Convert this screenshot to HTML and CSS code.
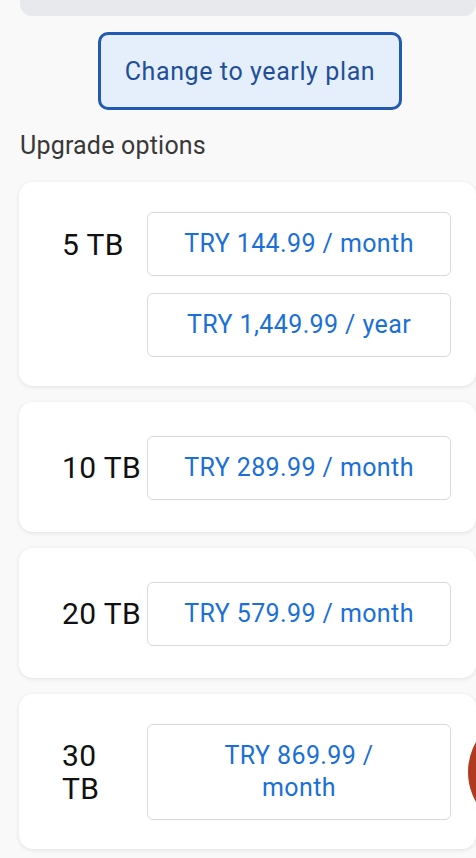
FILE: index.html
```html
<!DOCTYPE html>
<html lang="en">

<head>
    <meta charset="UTF-8">
    <meta name="viewport" content="width=device-width, initial-scale=1.0">
    <title>Storage plans</title>
    <link rel="stylesheet" href="styles.css">
</head>

<body>

    <div class="page">
        <div class="current-plan"></div>

        <button class="switch-btn">Change to yearly plan</button>

        <h2 class="section-title">Upgrade options</h2>

        <div class="plans">
            <div class="plan-card">
                <div class="plan-size">5 TB</div>
                <button class="price-btn">TRY 144.99 / month</button>
                <button class="price-btn">TRY 1,449.99 / year</button>
            </div>

            <div class="plan-card">
                <div class="plan-size">10 TB</div>
                <button class="price-btn">TRY 289.99 / month</button>
            </div>

            <div class="plan-card">
                <div class="plan-size">20 TB</div>
                <button class="price-btn">TRY 579.99 / month</button>
            </div>

            <div class="plan-card">
                <div class="plan-size">30<br>TB</div>
                <button class="price-btn">TRY 869.99 /<br>month</button>
            </div>
        </div>
    </div>

    <div class="fab"></div>

</body>

</html>
```

FILE: styles.css
```css
body {
    font-family: Roboto, "Noto Sans", Arial, sans-serif;
    margin: 0;
    background: #f9f9f9;
    overflow: hidden;
    width: 476px;
    height: 858px;
    position: relative;
}

.page {
    padding-left: 19px;
}

.current-plan {
    height: 40px;
    margin-top: -24px;
    margin-left: 1px;
    width: 456px;
    background-color: #e8e9ec;
    border-radius: 12px;
}

.switch-btn {
    display: block;
    margin: 16px 0 0 79px;
    width: 304px;
    height: 78px;
    background-color: #e5effc;
    border: 3px solid #2159b3;
    border-radius: 10px;
    color: #1f4f98;
    font-family: Roboto, "Noto Sans", Arial, sans-serif;
    font-size: 25px;
    font-weight: 400;
    letter-spacing: 0.6px;
    padding: 0;
}

.section-title {
    margin: 17px 0 0 1px;
    font-size: 25px;
    font-weight: 400;
    letter-spacing: 0.2px;
    line-height: 38px;
    color: #383838;
}

.plans {
    margin-top: 17px;
    display: flex;
    flex-direction: column;
    gap: 16px;
}

.plan-card {
    box-sizing: border-box;
    width: 457px;
    min-height: 130px;
    padding: 30px 25px 29px 43px;
    background: white;
    border-radius: 14px;
    box-shadow: 0 1px 4px rgba(0, 0, 0, 0.1);
    display: grid;
    grid-template-columns: 85px 1fr;
    row-gap: 17px;
    align-content: center;
}

.plan-size {
    grid-row: 1;
    align-self: center;
    font-size: 30px;
    letter-spacing: 0.4px;
    line-height: 33px;
    color: #111;
    white-space: nowrap;
}

.price-btn {
    grid-column: 2;
    background: white;
    border: 1px solid #d9d9d9;
    border-radius: 6px;
    padding: 15px 6px;
    color: #1a6fd8;
    font-family: Roboto, "Noto Sans", Arial, sans-serif;
    font-size: 25px;
    letter-spacing: 0.4px;
    line-height: 32px;
    text-align: center;
}

.fab {
    position: absolute;
    left: 468px;
    top: 712px;
    width: 120px;
    height: 120px;
    border-radius: 50%;
    background-color: #b0391e;
}
```
